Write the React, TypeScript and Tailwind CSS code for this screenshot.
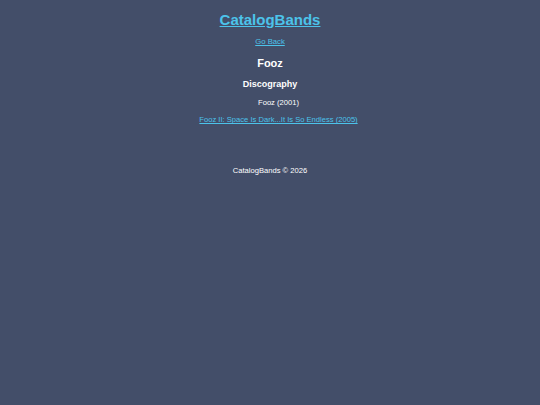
export default function App() {
  return (
    <div className="min-h-screen bg-[#434e69] text-white text-center leading-none font-['Liberation_Sans',Arial,sans-serif]">
      <header className="pt-[12px]">
        <a href="#" className="block text-[15px] font-bold text-[#4cc3ea] underline">
          CatalogBands
        </a>
      </header>
      <main className="flex flex-col items-center">
        <a href="#" className="mt-[11px] text-[7.7px] text-[#4cc3ea] underline">
          Go Back
        </a>
        <h1 className="mt-[12px] text-[11px] font-bold">Fooz</h1>
        <h2 className="mt-[11px] text-[9px] font-bold">Discography</h2>
        <ul className="mt-[10px] pl-[17px] flex flex-col items-center gap-[10px] text-[7.6px]">
          <li>Fooz (2001)</li>
          <li>
            <a href="#" className="text-[#4cc3ea] underline">
              Fooz II: Space Is Dark...It Is So Endless (2005)
            </a>
          </li>
        </ul>
      </main>
      <footer className="mt-[43px] text-[7.6px]">CatalogBands © 2026</footer>
    </div>
  )
}
